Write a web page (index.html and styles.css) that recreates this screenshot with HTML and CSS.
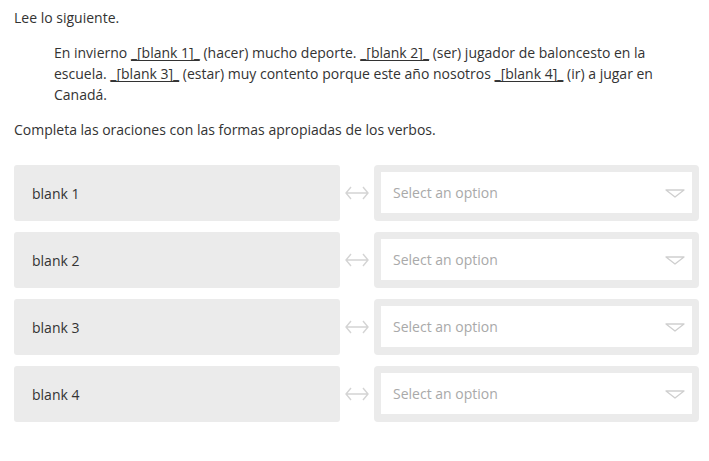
FILE: index.html
```html
<!DOCTYPE html>
<html lang="en">
  <head>
    <meta charset="UTF-8" />
    <title>Completa las oraciones</title>
    <link rel="stylesheet" href="styles.css">
  </head>
  <body>
    <section class="question">
      <p class="intro">Lee lo siguiente.</p>
      <blockquote class="passage">
        En invierno <span class="blank">_[blank 1]_</span> (hacer) mucho deporte. <span class="blank">_[blank 2]_</span> (ser) jugador de baloncesto en la
        escuela. <span class="blank">_[blank 3]_</span> (estar) muy contento porque este año nosotros <span class="blank">_[blank 4]_</span> (ir) a jugar en
        Canadá.
      </blockquote>
      <p class="prompt">Completa las oraciones con las formas apropiadas de los verbos.</p>

      <div class="matches">
        <div class="match">
          <div class="label">blank 1</div>
          <svg class="link" viewBox="0 0 24 14"><path d="M6 1 L1 7 L6 13 M1 7 H23 M18 1 L23 7 L18 13" /></svg>
          <div class="select-wrap">
            <div class="select">
              <span>Select an option</span>
              <svg class="caret" viewBox="0 0 20 9"><path d="M1 1 H19 L10 8 Z" /></svg>
            </div>
          </div>
        </div>
        <div class="match">
          <div class="label">blank 2</div>
          <svg class="link" viewBox="0 0 24 14"><path d="M6 1 L1 7 L6 13 M1 7 H23 M18 1 L23 7 L18 13" /></svg>
          <div class="select-wrap">
            <div class="select">
              <span>Select an option</span>
              <svg class="caret" viewBox="0 0 20 9"><path d="M1 1 H19 L10 8 Z" /></svg>
            </div>
          </div>
        </div>
        <div class="match">
          <div class="label">blank 3</div>
          <svg class="link" viewBox="0 0 24 14"><path d="M6 1 L1 7 L6 13 M1 7 H23 M18 1 L23 7 L18 13" /></svg>
          <div class="select-wrap">
            <div class="select">
              <span>Select an option</span>
              <svg class="caret" viewBox="0 0 20 9"><path d="M1 1 H19 L10 8 Z" /></svg>
            </div>
          </div>
        </div>
        <div class="match">
          <div class="label">blank 4</div>
          <svg class="link" viewBox="0 0 24 14"><path d="M6 1 L1 7 L6 13 M1 7 H23 M18 1 L23 7 L18 13" /></svg>
          <div class="select-wrap">
            <div class="select">
              <span>Select an option</span>
              <svg class="caret" viewBox="0 0 20 9"><path d="M1 1 H19 L10 8 Z" /></svg>
            </div>
          </div>
        </div>
      </div>
    </section>
  </body>
</html>
```

FILE: styles.css
```css
body {
  font-family: "Open Sans", Arial, sans-serif;
  font-size: 14px;
  line-height: 21px;
  color: #333333;
  background: #ffffff;
  margin: 0;
  padding: 0;
}

.question {
  padding: 7px 10px 0 14px;
}

.intro {
  margin: 0 0 14px;
}

.passage {
  margin: 0 0 14px 40px;
  padding-right: 30px;
}

.blank {
  text-decoration: underline;
  text-underline-offset: 2px;
}

.prompt {
  margin: 0 0 25px;
}

.matches {
  display: flex;
  flex-direction: column;
  gap: 11px;
}

.match {
  display: flex;
  align-items: stretch;
  height: 56px;
}

.label {
  width: 326px;
  flex-shrink: 0;
  background: #ebebeb;
  border-radius: 3px;
  padding-left: 18px;
  box-sizing: border-box;
  display: flex;
  align-items: center;
}

.link {
  width: 24px;
  height: 14px;
  align-self: center;
  margin: 0 5px;
  flex-shrink: 0;
}

.link path {
  fill: none;
  stroke: #d4d4d4;
  stroke-width: 1.4;
}

.select-wrap {
  width: 325px;
  flex-shrink: 0;
  background: #ebebeb;
  border-radius: 4px;
  padding: 7px 7px 8px 7px;
  box-sizing: border-box;
}

.select {
  height: 100%;
  background: #ffffff;
  display: flex;
  align-items: center;
  justify-content: space-between;
  padding: 0 7px 0 12px;
  color: #a9a9a9;
}

.caret {
  width: 20px;
  height: 9px;
  margin-top: 2px;
}

.caret path {
  fill: none;
  stroke: #cfcfcf;
  stroke-width: 1.3;
  stroke-linejoin: round;
}
```
